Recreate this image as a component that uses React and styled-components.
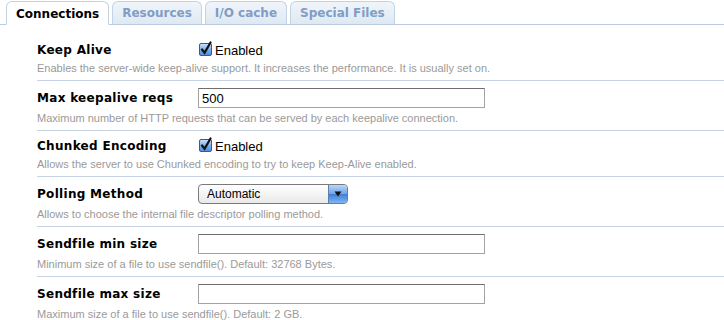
import React from "react";
import styled, { createGlobalStyle } from "styled-components";

const GlobalStyle = createGlobalStyle`
  body {
    margin: 0;
    background: #ffffff;
    font-family: "Liberation Sans", Arial, sans-serif;
  }
`;

const tabs = ["Connections", "Resources", "I/O cache", "Special Files"];

const rows = [
  {
    label: "Keep Alive",
    kind: "check",
    help: "Enables the server-wide keep-alive support. It increases the performance. It is usually set on.",
  },
  {
    label: "Max keepalive reqs",
    kind: "text",
    value: "500",
    help: "Maximum number of HTTP requests that can be served by each keepalive connection.",
  },
  {
    label: "Chunked Encoding",
    kind: "check",
    help: "Allows the server to use Chunked encoding to try to keep Keep-Alive enabled.",
  },
  {
    label: "Polling Method",
    kind: "select",
    value: "Automatic",
    help: "Allows to choose the internal file descriptor polling method.",
  },
  {
    label: "Sendfile min size",
    kind: "text",
    value: "",
    help: "Minimum size of a file to use sendfile(). Default: 32768 Bytes.",
  },
  {
    label: "Sendfile max size",
    kind: "text",
    value: "",
    help: "Maximum size of a file to use sendfile(). Default: 2 GB.",
  },
];

const CheckIcon = () => (
  <svg width="15" height="15" viewBox="0 0 15 15">
    <defs>
      <linearGradient id="cb" x1="0" y1="0" x2="0" y2="1">
        <stop offset="0" stopColor="#cfe3fb" />
        <stop offset="0.5" stopColor="#7fb0ec" />
        <stop offset="1" stopColor="#4f8ad9" />
      </linearGradient>
    </defs>
    <rect x="1.5" y="2.5" width="12" height="12" rx="1.5" fill="url(#cb)" stroke="#3e5a86" />
    <path d="M4 8.5 L6.6 11.8 L12.5 1.5" fill="none" stroke="#111" strokeWidth="2.2" strokeLinecap="round" />
  </svg>
);

const Field = ({ row }) => {
  if (row.kind === "check") {
    return (
      <CheckLabel>
        <CheckIcon />
        Enabled
      </CheckLabel>
    );
  }
  if (row.kind === "select") {
    return (
      <Select>
        <SelectText>{row.value}</SelectText>
        <SelectArrow>
          <svg width="8" height="6" viewBox="0 0 8 6">
            <path d="M0.5 0.5 L7.5 0.5 L4 5.5 Z" fill="#111" />
          </svg>
        </SelectArrow>
      </Select>
    );
  }
  return <TextInput type="text" defaultValue={row.value} />;
};

const App = () => {
  return (
    <Page>
      <GlobalStyle />
      <TabBar>
        {tabs.map((t, i) => (
          <Tab key={t} active={i === 0}>
            {t}
          </Tab>
        ))}
      </TabBar>
      <Form>
        {rows.map((row) => (
          <Row key={row.label}>
            <FieldLine>
              <Label>{row.label}</Label>
              <Field row={row} />
            </FieldLine>
            <Help>{row.help}</Help>
          </Row>
        ))}
      </Form>
    </Page>
  );
};

const Page = styled.div`
  width: 724px;
  height: 320px;
  overflow: hidden;
  background: #ffffff;
`;

const TabBar = styled.div`
  display: flex;
  align-items: flex-end;
  gap: 3px;
  height: 24px;
  padding-left: 6px;
  border-bottom: 1px solid #b9cce0;
`;

const Tab = styled.div`
  display: flex;
  align-items: center;
  box-sizing: border-box;
  padding: 0 9px;
  height: ${(p) => (p.active ? "24px" : "23px")};
  margin-bottom: ${(p) => (p.active ? "-1px" : "0")};
  border: 1px solid #c2d3e6;
  border-bottom: ${(p) => (p.active ? "1px solid #ffffff" : "none")};
  border-radius: 6px 6px 0 0;
  background: ${(p) =>
    p.active ? "#ffffff" : "linear-gradient(#f0f5fa, #dfe8f2)"};
  color: ${(p) => (p.active ? "#000000" : "#7f9dc6")};
  font-family: "DejaVu Sans", Verdana, sans-serif;
  font-weight: bold;
  font-size: 12px;
  padding-top: ${(p) => (p.active ? "1px" : "0")};
`;

const Form = styled.div`
  padding: 10px 0 0 37px;
`;

const Row = styled.div`
  padding: 7px 0 5px;
  border-bottom: 1px solid #c6d3e4;

  &:last-child {
    border-bottom: none;
  }
`;

const FieldLine = styled.div`
  display: flex;
  align-items: center;
  min-height: 16px;
`;

const Label = styled.div`
  width: 161px;
  flex-shrink: 0;
  font-family: "DejaVu Sans", Verdana, sans-serif;
  font-weight: bold;
  font-size: 12px;
  letter-spacing: 0.3px;
  color: #000000;
`;

const CheckLabel = styled.label`
  display: flex;
  align-items: center;
  gap: 2px;
  font-size: 13px;
  color: #000000;

  svg {
    margin-top: -3px;
  }
`;

const TextInput = styled.input`
  box-sizing: border-box;
  width: 287px;
  height: 20px;
  margin: 0;
  padding: 1px 3px;
  border: 1px solid #a3a3a3;
  border-top-color: #6e6e6e;
  font-family: "Liberation Sans", Arial, sans-serif;
  font-size: 13px;
  color: #000000;
  outline: none;
`;

const Select = styled.div`
  box-sizing: border-box;
  display: flex;
  width: 150px;
  height: 20px;
  border: 1px solid #7a7a7a;
  border-radius: 4px;
  overflow: hidden;
  background: linear-gradient(#ffffff, #e9e9e9);
`;

const SelectText = styled.div`
  flex: 1;
  display: flex;
  align-items: center;
  padding-left: 8px;
  font-size: 12px;
  color: #000000;
`;

const SelectArrow = styled.div`
  width: 18px;
  display: flex;
  align-items: center;
  justify-content: center;
  border-left: 1px solid #5b7fae;
  background: linear-gradient(#b9d6f7, #6ea3e6 50%, #3f7fd6 52%, #7fb5f2);
`;

const Help = styled.div`
  margin-top: 4px;
  font-size: 11px;
  line-height: 13px;
  color: #9a9a9a;
`;

export default App;
